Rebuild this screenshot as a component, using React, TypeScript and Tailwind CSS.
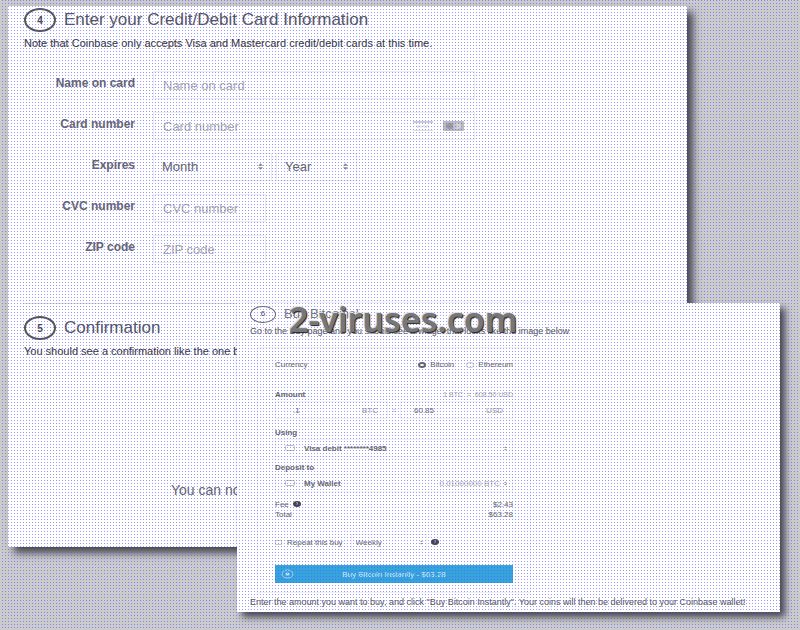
import { clsx } from "clsx"

function StepHeading({ step, title, small }: { step: number; title: string; small?: boolean }) {
  return (
    <div className={clsx("flex items-center", small ? "h-[18px] gap-2" : "h-6 gap-2")}>
      <span
        className={clsx(
          "flex items-center justify-center rounded-[50%] text-[#444]",
          small
            ? "h-[17px] w-[26px] border border-[#666] text-[8px]"
            : "h-6 w-8 border-2 border-[#555] text-[10px] font-bold"
        )}
      >
        {step}
      </span>
      <h2 className={small ? "text-[13px] text-[#777]" : "text-[17px] leading-5 text-[#55555c]"}>{title}</h2>
    </div>
  )
}

function UpDown({ className }: { className: string }) {
  return (
    <svg className={className} viewBox="0 0 6 8" fill="currentColor">
      <path d="M3 0l3 3H0zM3 8l3-3H0z" />
    </svg>
  )
}

const inputStyle =
  "h-[28px] border border-[#ececee] bg-transparent px-[9px] text-[13px] text-[#666] placeholder:text-[#aaa] outline-none"

function FormRow({ id, label, children }: { id: string; label: string; children: React.ReactNode }) {
  return (
    <div className="flex h-[41px] items-start">
      <label htmlFor={id} className="w-[111px] pt-1 text-right text-[12px] leading-[16px] font-bold text-[#66666c]">
        {label}
      </label>
      <div className="ml-[18px] flex gap-1">{children}</div>
    </div>
  )
}

function SelectBox({ id, label, className }: { id: string; label: string; className: string }) {
  return (
    <div className={clsx("relative", className)}>
      <select
        id={id}
        aria-label={label}
        className="h-[28px] w-full appearance-none border border-[#ececee] bg-transparent px-2 text-[13px] text-[#666] outline-none"
      >
        <option>{label}</option>
      </select>
      <UpDown className="pointer-events-none absolute top-[10px] right-[9px] h-[7px] w-[5px] text-[#888]" />
    </div>
  )
}

function VisaIcon() {
  return (
    <svg width="22" height="12" viewBox="0 0 22 12">
      <rect x="1" width="20" height="2" fill="#ccc" />
      <rect x="1" y="9" width="20" height="1" fill="#ddd" />
      <path d="M5 4l1 3 1-3M9 4v3M13 4l-2 1 2 2M14 7l1-3 2 3" fill="none" stroke="#ddd" />
    </svg>
  )
}

function MastercardIcon() {
  return (
    <svg width="22" height="12" viewBox="0 0 22 12">
      <rect width="21" height="10" rx="1" fill="#bbb" />
      <ellipse cx="7" cy="5" rx="4" ry="3" fill="#9a9a9f" />
      <ellipse cx="14" cy="5" rx="4" ry="3" fill="#d6d6d8" />
      <path d="M9 4h5M9 6h5" stroke="#a8a8ac" strokeWidth=".7" />
    </svg>
  )
}

function CardPanel() {
  return (
    <section className="mr-[113px] ml-2 h-[541px] bg-white px-4 pt-[2px] shadow-[6px_6px_8px_#444]">
      <StepHeading step={4} title="Enter your Credit/Debit Card Information" />
      <p className="mt-1 text-[11px] leading-[14px] text-[#333]">
        Note that Coinbase only accepts Visa and Mastercard credit/debit cards at this time.
      </p>
      <form className="mt-[21px]">
        <FormRow id="name" label="Name on card">
          <input id="name" placeholder="Name on card" className={clsx(inputStyle, "w-[322px]")} />
        </FormRow>
        <FormRow id="number" label="Card number">
          <div className="relative">
            <input id="number" placeholder="Card number" className={clsx(inputStyle, "w-[322px]")} />
            <span className="absolute top-[9px] right-[10px] flex gap-[9px]">
              <VisaIcon />
              <MastercardIcon />
            </span>
          </div>
        </FormRow>
        <FormRow id="month" label="Expires">
          <SelectBox id="month" label="Month" className="w-[119px]" />
          <SelectBox id="year" label="Year" className="w-[81px]" />
        </FormRow>
        <FormRow id="cvc" label="CVC number">
          <input id="cvc" placeholder="CVC number" className={clsx(inputStyle, "w-[113px]")} />
        </FormRow>
        <FormRow id="zip" label="ZIP code">
          <input id="zip" placeholder="ZIP code" className={clsx(inputStyle, "w-[113px]")} />
        </FormRow>
      </form>
      <hr className="mt-[27px] mb-3 border-[#ddd]" />
      <StepHeading step={5} title="Confirmation" />
      <p className="mt-1 text-[11px] leading-[14px] text-[#333]">
        You should see a confirmation like the one below
      </p>
      <p className="mt-[124px] pl-[147px] text-[14px] leading-[16px] text-[#666]">You can now buy</p>
    </section>
  )
}

function HelpDot() {
  return (
    <svg width="8" height="6" viewBox="0 0 8 6">
      <ellipse cx="4" cy="3" rx="4" ry="3" fill="#444450" />
      <path d="M3 2q1-1 2 0L4 3v1" fill="none" stroke="#bbb" strokeWidth=".7" />
    </svg>
  )
}

function WalletIcon() {
  return (
    <svg width="10" height="6" viewBox="0 0 10 6">
      <rect x=".5" y=".5" width="9" height="5" rx="1" fill="none" stroke="#bbb" />
    </svg>
  )
}

function AccountRow({ title, name, amount }: { title: string; name: string; amount?: string }) {
  return (
    <>
      <h3 className="h-[9px] font-bold">{title}</h3>
      <div className="mt-[2px] mb-[6px] flex h-[18px] items-center border border-[#f3f3f5] px-[9px]">
        <WalletIcon />
        <span className="ml-[9px] grow font-bold">{name}</span>
        <span className="mr-1 text-[#aaa]">{amount}</span>
        <UpDown className="mr-[-4px] h-[5px] w-[3px] text-[#999]" />
      </div>
    </>
  )
}

function BuyWidget() {
  return (
    <form className="ml-[7px] h-[246px] w-[274px] border border-[#f0f0f3] px-[17px] pt-[12px] text-[8px] leading-[9px] text-[#666]">
      <div className="flex items-center">
        <span className="grow">Currency</span>
        <label className="flex items-center gap-1">
          <input
            type="radio"
            name="currency"
            defaultChecked
            className="h-[6px] w-2 appearance-none rounded-[50%] border border-[#999] checked:border-2 checked:border-[#666]"
          />
          Bitcoin
        </label>
        <label className="ml-3 flex items-center gap-1">
          <input type="radio" name="currency" className="h-[6px] w-2 appearance-none rounded-[50%] border border-[#ccc]" />
          Ethereum
        </label>
      </div>
      <div className="mt-[21px] flex">
        <label htmlFor="btc" className="grow font-bold">Amount</label>
        <span className="text-[7px] text-[#aaa]">1 BTC&nbsp; = &nbsp;608.50 USD</span>
      </div>
      <div className="mt-[2px] flex h-[18px] items-center">
        <div className="flex h-full w-[113px] items-center border border-[#f3f3f5] px-[9px]">
          <input id="btc" defaultValue=".1" className="min-w-0 grow bg-transparent pl-2 outline-none" />
          <span className="text-[#999]">BTC</span>
        </div>
        <span className="w-[13px] text-center text-[#bbb]">=</span>
        <div className="flex h-full w-[113px] items-center border border-[#f3f3f5] px-[9px]">
          <input aria-label="USD amount" defaultValue="60.85" className="min-w-0 grow bg-transparent pl-1 outline-none" />
          <span className="text-[#999]">USD</span>
        </div>
      </div>
      <div className="mt-[9px]">
        <AccountRow title="Using" name="Visa debit ********4985" />
        <AccountRow title="Deposit to" name="My Wallet" amount="0.01000000 BTC" />
      </div>
      <div className="mt-[7px] flex h-[10px] items-center">
        <span className="mr-1">Fee</span>
        <HelpDot />
        <span className="grow text-right">$2.43</span>
      </div>
      <div className="flex h-[10px] items-center justify-between">
        <span>Total</span>
        <span>$63.28</span>
      </div>
      <div className="mt-[14px] flex h-[18px] items-center">
        <label className="flex items-center gap-[5px]">
          <input type="checkbox" className="h-[5px] w-[7px] appearance-none border border-[#ccc]" />
          Repeat this buy
        </label>
        <div className="relative ml-2 w-[76px]">
          <select aria-label="Repeat interval" className="h-4 w-full appearance-none border border-[#f3f3f5] bg-transparent px-1 outline-none">
            <option>Weekly</option>
          </select>
          <UpDown className="pointer-events-none absolute top-[6px] right-1 h-[5px] w-[3px] text-[#999]" />
        </div>
        <span className="ml-1">
          <HelpDot />
        </span>
      </div>
      <button type="button" className="relative mt-[14px] h-[18px] w-full bg-[#36a4dc] text-[#cfeaf8]">
        <svg className="absolute top-1 left-[6px]" width="13" height="10" viewBox="0 0 13 10">
          <ellipse cx="6.5" cy="5" rx="5.5" ry="4" fill="none" stroke="#a5d8f2" />
          <ellipse cx="6.5" cy="5" rx="2" ry="1.5" fill="#c5e6f7" />
        </svg>
        Buy Bitcoin Instantly - $63.28
      </button>
    </form>
  )
}

function BuyPanel() {
  return (
    <section className="absolute top-[303px] right-5 left-[237px] h-[309px] bg-white px-[13px] pt-[2px] shadow-[5px_5px_7px_#444]">
      <StepHeading step={6} title="Buy Bitcoins!" small />
      <p className="mt-1 mb-3 text-[9px] leading-[8px] text-[#555]">
        Go to the Buy page and you should see a widget that looks like the image below
      </p>
      <BuyWidget />
      <p className="mt-1 text-[9px] leading-[10px] whitespace-nowrap text-[#555]">
        Enter the amount you want to buy, and click "Buy Bitcoin Instantly". Your coins will then be delivered to your Coinbase wallet!
      </p>
    </section>
  )
}

export default function App() {
  return (
    <main className="relative min-h-screen overflow-hidden bg-[#cbcbcb] pt-[6px] font-['Liberation_Sans',Arial,sans-serif]">
      <CardPanel />
      <BuyPanel />
      {/* dotted screen over both panels */}
      <div className="pointer-events-none absolute inset-0 bg-[conic-gradient(from_90deg_at_2px_2px,#5555ff99_25%,transparent_0)] bg-size-[3px_3px] bg-position-[0_1px]" />
      <div className="absolute top-[298px] left-[289px] font-['Noto_Sans',sans-serif] text-[34px] leading-[42px] font-semibold text-[#77777a] [text-shadow:1px_1px_1px_#222,-1px_-1px_1px_#ddd]">
        2-viruses.com
      </div>
    </main>
  )
}
